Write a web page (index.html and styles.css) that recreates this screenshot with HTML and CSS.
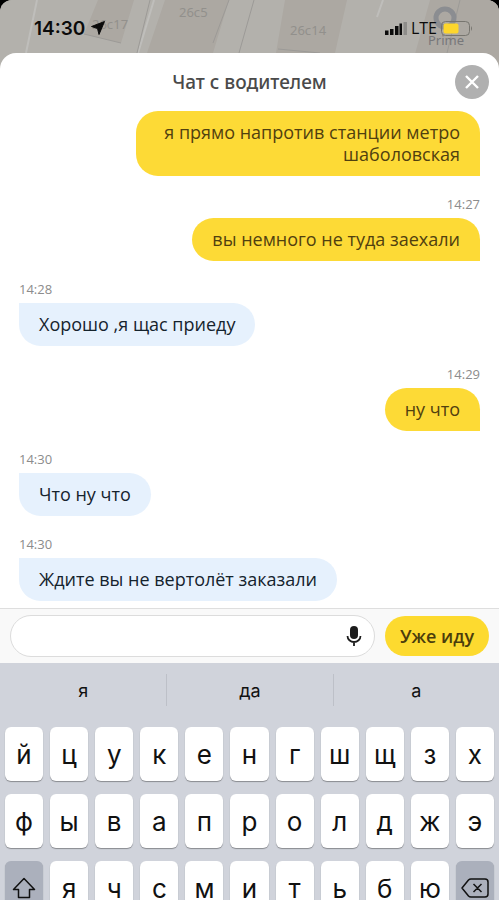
FILE: index.html
```html
<!DOCTYPE html>
<html lang="ru">
<head>
  <meta charset="UTF-8" />
  <meta name="viewport" content="width=device-width, initial-scale=1.0"/>
  <title>Чат с водителем</title>
  <link rel="stylesheet" href="styles.css">
</head>
<body>
  <div class="status-bar">
    <svg class="map" viewBox="0 0 499 72" preserveAspectRatio="xMidYMin slice" aria-hidden="true">
      <rect width="499" height="72" fill="#b3b1ac"/>
      <path d="M40 0H134L121 43L84 34L98 0M165 0H229L213 53H147ZM285 0H347L335 53H276ZM430 0H499V72H410Z" fill="#aca8a2"/>
      <path d="M37 0L26 53M154 0L138 53M383 0L377 17" fill="none" stroke="#bfbebb" stroke-width="2"/>
      <path d="M150 0L137 53M229 0L213 43M254 0L239 53M278 49L320 53M460 0L447 53M84 34L121 43" fill="none" stroke="#9c9a97" stroke-width="1"/>
      <circle cx="445" cy="18" r="9" fill="none" stroke="#8b8d91" stroke-width="5"/>
      <g class="map-label">
        <text x="92" y="29">26с17</text>
        <text x="179" y="17">26с5</text>
        <text x="290" y="35">26с14</text>
        <text x="428" y="45" class="prime">Prime</text>
      </g>
    </svg>
    <div class="clock">
      <span>14:30</span>
      <svg width="14" height="14" viewBox="0 0 14 14" aria-hidden="true"><path d="M13.5 0.5L0.5 5.5L6.5 7.5L8 13.5Z" fill="#0b0b0b" stroke="#0b0b0b" stroke-linejoin="round"/></svg>
    </div>
    <div class="signal">
      <svg width="23" height="14" viewBox="0 0 23 14" aria-hidden="true">
        <path d="M1 9.500h3.500V14H1zM6 8h3.500v6H6zM11 5h3.500v9H11zM15.500 2.500H18V14h-2.500z" fill="#0b0b0b"/>
        <path d="M19.500 1H23v13h-3.500z" fill="#8e8d8a"/>
      </svg>
      <span>LTE</span>
      <svg width="32" height="15" viewBox="0 0 32 15" aria-hidden="true">
        <rect x="0.500" y="0.500" width="28" height="14" rx="4" fill="none" stroke="#77756f"/>
        <rect x="2.500" y="2.500" width="15" height="10" rx="2" fill="#fdd62c"/>
        <path d="M30 5q2 2.500 0 5z" fill="#77756f"/>
      </svg>
    </div>
  </div>

  <main class="sheet">
    <header class="sheet-header">
      <h1>Чат с водителем</h1>
      <button class="close" aria-label="Закрыть">
        <svg width="16" height="16" viewBox="0 0 16 16"><path d="M2 2L14 14M14 2L2 14" stroke="#fff" stroke-width="2.400"/></svg>
      </button>
    </header>

    <section class="messages">
      <div class="message mine">
        <p class="bubble">я прямо напротив станции метро шаболовская</p>
      </div>
      <div class="message mine">
        <time>14:27</time>
        <p class="bubble">вы немного не туда заехали</p>
      </div>
      <div class="message">
        <time>14:28</time>
        <p class="bubble">Хорошо ,я щас приеду</p>
      </div>
      <div class="message mine">
        <time>14:29</time>
        <p class="bubble">ну что</p>
      </div>
      <div class="message">
        <time>14:30</time>
        <p class="bubble">Что ну что</p>
      </div>
      <div class="message">
        <time>14:30</time>
        <p class="bubble">Ждите вы не вертолёт заказали</p>
      </div>
    </section>

    <form class="composer">
      <div class="field">
        <input type="text" aria-label="Сообщение">
        <button type="button" class="mic" aria-label="Голосовой ввод">
          <svg width="16" height="20" viewBox="0 0 16 20">
            <rect x="4" y="0" width="8" height="13" rx="4" fill="#1c1c1c"/>
            <path d="M1.500 10a6.500 6 0 0 0 13 0M8 16v4" fill="none" stroke="#1c1c1c" stroke-width="1.800"/>
          </svg>
        </button>
      </div>
      <button type="button" class="quick-reply">Уже иду</button>
    </form>
  </main>

  <div class="keyboard">
    <div class="suggestions">
      <button>я</button>
      <button>да</button>
      <button>а</button>
    </div>
    <div class="keys">
      <button>й</button>
      <button>ц</button>
      <button>у</button>
      <button>к</button>
      <button>е</button>
      <button>н</button>
      <button>г</button>
      <button>ш</button>
      <button>щ</button>
      <button>з</button>
      <button>х</button>
      <button>ф</button>
      <button>ы</button>
      <button>в</button>
      <button>а</button>
      <button>п</button>
      <button>р</button>
      <button>о</button>
      <button>л</button>
      <button>д</button>
      <button>ж</button>
      <button>э</button>
      <button class="special" aria-label="Shift">
        <svg width="24" height="22" viewBox="0 0 24 22"><path d="M12 1.500L1.500 12.500H6.500V20.500H17.500V12.500H22.500Z" fill="none" stroke="#111" stroke-width="1.500" stroke-linejoin="round"/></svg>
      </button>
      <button>я</button>
      <button>ч</button>
      <button>с</button>
      <button>м</button>
      <button>и</button>
      <button>т</button>
      <button>ь</button>
      <button>б</button>
      <button>ю</button>
      <button class="special" aria-label="Удалить">
        <svg width="28" height="20" viewBox="0 0 28 20"><path d="M10 1H24a3 3 0 0 1 3 3V16a3 3 0 0 1-3 3H10Q8.500 19 7.500 18L1 10L7.500 2Q8.500 1 10 1zM12.500 6L20.500 14M20.500 6L12.500 14" fill="none" stroke="#111" stroke-width="1.500" stroke-linejoin="round"/></svg>
      </button>
    </div>
  </div>
</body>
</html>
```
FILE: styles.css
```css
* {
  box-sizing: border-box;
}

body {
  margin: 0;
  height: 100vh;
  overflow: hidden;
  background: #000;
  font-family: "Open Sans", "Noto Sans", sans-serif;
}

button {
  border: none;
  padding: 0;
  background: none;
  font-family: inherit;
  color: inherit;
  cursor: pointer;
}

svg {
  display: block;
}

/* status bar over the dimmed map */
.status-bar {
  position: relative;
  display: flex;
  justify-content: space-between;
  height: 72px;
  padding: 17px 26px 0 34px;
  border-radius: 12px 12px 0 0;
  overflow: hidden;
  background: #b3b1ac;
  color: #0b0b0b;
  font-family: Inter, sans-serif;
}

.map {
  position: absolute;
  top: 0;
  left: 0;
  width: 100%;
  height: 100%;
}

.map-label {
  font-family: "Noto Sans", sans-serif;
  font-size: 13px;
  fill: #92908c;
}

.prime {
  fill: #77777a;
}

.clock,
.signal {
  position: relative;
  display: flex;
  align-items: center;
  height: 22px;
}

.clock {
  gap: 6px;
  font-size: 19px;
  font-weight: 600;
}

.signal {
  gap: 4px;
  font-family: "Open Sans", sans-serif;
  font-size: 16px;
  font-weight: 500;
}

.sheet {
  position: relative;
  margin-top: -19px;
  border-radius: 16px 16px 0 0;
  background: #fff;
}

.sheet-header {
  display: grid;
  grid-template-columns: 34px 1fr 34px;
  align-items: center;
  height: 58px;
  padding: 0 10px;
}

.sheet-header h1 {
  grid-column: 2;
  margin: 0;
  font-family: "Noto Sans", sans-serif;
  font-size: 19px;
  font-weight: 500;
  text-align: center;
  color: #4a4a4a;
}

.close {
  display: grid;
  place-items: center;
  width: 34px;
  height: 34px;
  border-radius: 50%;
  background: #b0b0b0;
}

.messages {
  display: flex;
  flex-direction: column;
  gap: 20px;
  padding: 0 19px 7px;
}

.message {
  display: flex;
  flex-direction: column;
  align-items: flex-start;
}

.message time {
  height: 22px;
  font-size: 13px;
  line-height: 16px;
  color: #8c8c8c;
}

.bubble {
  max-width: 344px;
  margin: 0;
  padding: 10px 20px 11px;
  border-radius: 0 22px 22px 22px;
  background: #e6f1fd;
  color: #15232d;
  font-size: 18px;
  line-height: 22px;
}

.mine {
  align-items: flex-end;
  text-align: right;
}

.mine .bubble {
  border-radius: 22px 22px 0 22px;
  background: #fdda36;
  color: #50400f;
}

.composer {
  display: flex;
  align-items: center;
  gap: 10px;
  height: 55px;
  padding: 0 10px;
  border-top: 1px solid #dedede;
  background: #f9f9f9;
}

.field {
  display: flex;
  align-items: center;
  flex: 1;
  height: 42px;
  padding: 0 12px 0 20px;
  border: 1px solid #dcdcdc;
  border-radius: 21px;
  background: #fff;
}

.field input {
  flex: 1;
  min-width: 0;
  border: none;
  outline: none;
  background: none;
  font: inherit;
}

.quick-reply {
  width: 104px;
  height: 40px;
  border-radius: 20px;
  background: #fdda2f;
  color: #4b3d0c;
  font-size: 18px;
  font-weight: 600;
}

.keyboard {
  background: #d0d3db;
  color: #111;
  font-family: Inter, sans-serif;
}

.suggestions {
  display: grid;
  grid-template-columns: repeat(3, 1fr);
  height: 64px;
  padding: 11px 0 21px;
}

.suggestions button {
  font-size: 18px;
}

.suggestions button + button {
  border-left: 1px solid #bdc0c8;
}

.keys {
  display: grid;
  grid-template-columns: repeat(11, 1fr);
  gap: 13px 7px;
  padding: 0 5px 14px;
}

.keys button {
  display: grid;
  place-items: center;
  height: 54px;
  border-radius: 6px;
  background: #fff;
  box-shadow: 0 1px 1px #898b90;
  font-size: 26px;
}

.keys .special {
  background: #abb0bc;
}
```
